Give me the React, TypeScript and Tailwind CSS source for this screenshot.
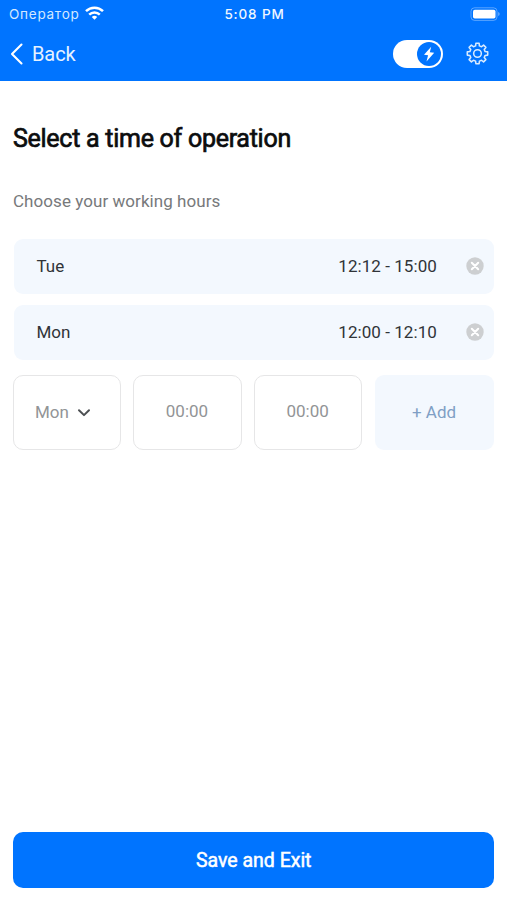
import React from "react";

const shifts = [
  { day: "Tue", hours: "12:12 - 15:00" },
  { day: "Mon", hours: "12:00 - 12:10" },
];

function gearOutline() {
  const points: string[] = [];
  const teeth = 8;
  const profile: [number, number][] = [
    [-14, 8.2],
    [-9, 10.8],
    [9, 10.8],
    [14, 8.2],
  ];
  for (let i = 0; i < teeth; i++) {
    for (const [offset, radius] of profile) {
      const angle = ((i * 360) / teeth + offset) * (Math.PI / 180);
      points.push(
        `${(12 + radius * Math.sin(angle)).toFixed(2)} ${(12 - radius * Math.cos(angle)).toFixed(2)}`,
      );
    }
  }
  return `M${points.join("L")}Z`;
}

function StatusBar() {
  return (
    <div className="grid h-7 grid-cols-[1fr_auto_1fr] items-center pl-[9px] pr-[7px] font-[Inter,sans-serif]">
      <div className="flex items-center gap-[5px]">
        <span className="text-[13.5px] tracking-[0.75px] text-[#d3e8ff]">Оператор</span>
        <svg className="-mt-[2px]" width="19" height="14" viewBox="0 0 19 14" fill="none" stroke="white" strokeWidth="2.5">
          <path d="M1 5.2a12.2 12.2 0 0 1 17 0" />
          <path d="M4.2 8.6a7.6 7.6 0 0 1 10.6 0" />
          <path d="M6.8 11.1a3.9 3.9 0 0 1 5.4 0L9.5 13.8Z" fill="white" stroke="none" />
        </svg>
      </div>
      <span className="text-[13.5px] font-medium tracking-[0.85px] text-[#f0f7ff]">5:08 PM</span>
      <svg className="-mt-px justify-self-end" width="30" height="14" viewBox="0 0 30 14">
        <rect x="1" y="0.8" width="26" height="12.6" rx="3.5" fill="none" stroke="white" strokeOpacity="0.35" />
        <rect x="3" y="2.8" width="22.5" height="8.8" rx="1.8" fill="white" />
        <path d="M28.3 5.1a2.2 2.2 0 0 1 0 4Z" fill="white" fillOpacity="0.5" />
      </svg>
    </div>
  );
}

function NavBar() {
  return (
    <div className="flex h-[51px] items-center pl-[10px] pr-[18px]">
      <button className="flex items-center gap-[9px] text-[20px] tracking-[-0.1px] text-[#e6f2ff]">
        <svg width="13" height="22" viewBox="0 0 13 22" fill="none" stroke="white" strokeWidth="2.1" strokeLinecap="round" strokeLinejoin="round">
          <path d="M11.5 1.5 2 11l9.5 9.5" />
        </svg>
        Back
      </button>
      <div className="ml-auto flex h-7 w-[50px] items-center justify-end rounded-full bg-white pr-[2px]">
        <div className="flex size-6 items-center justify-center rounded-full bg-[#0074ff]">
          <svg width="12" height="16" viewBox="0 0 12 16" fill="white">
            <path d="M8.2.8 1 8.8 5.1 9.3 3.5 15.4 11.2 6.7 6.8 6.2Z" />
          </svg>
        </div>
      </div>
      <svg className="ml-[23px]" width="23" height="23" viewBox="0 0 24 24" fill="none" stroke="#d9ebff" strokeWidth="1.6" strokeLinejoin="round">
        <path d={gearOutline()} />
        <circle cx="12" cy="12" r="4" />
      </svg>
    </div>
  );
}

function ShiftRow({ day, hours }: { day: string; hours: string }) {
  return (
    <div className="ml-px flex h-[55px] items-center rounded-[9px] bg-[#f3f8fe] pl-[22.5px] pr-[10px] text-[17px] text-[#303438]">
      <span>{day}</span>
      <span className="ml-auto tracking-[0.06px]">{hours}</span>
      <svg className="-mt-px ml-[29.5px]" width="18" height="18" viewBox="0 0 18 18">
        <circle cx="9" cy="9" r="8.7" fill="#cdcfd1" />
        <path d="m5.8 5.8 6.4 6.4m0-6.4-6.4 6.4" stroke="white" strokeWidth="2" strokeLinecap="round" />
      </svg>
    </div>
  );
}

export default function App() {
  return (
    <div className="flex h-[900px] w-[507px] flex-col bg-white font-[Roboto,sans-serif]">
      <header className="h-[81px] bg-[#0074ff] text-white">
        <StatusBar />
        <NavBar />
      </header>

      <main className="flex flex-1 flex-col pb-3 pl-[13px] pr-[12.6px]">
        <h1 className="mt-[42px] text-[25px] leading-8 tracking-[-0.27px] text-[#0c0d0e] [-webkit-text-stroke:0.7px_#0c0d0e]">
          Select a time of operation
        </h1>
        <p className="mt-[34px] text-[17px] leading-6 tracking-[0.06px] text-[#77797b]">Choose your working hours</p>

        <div className="mt-[26px] flex flex-col gap-[11px]">
          {shifts.map((shift) => (
            <ShiftRow key={shift.day} {...shift} />
          ))}
        </div>

        <div className="mt-[15px] grid h-[75px] grid-cols-[108px_108.4px_108.4px_1fr] gap-x-[12.3px] text-[17px] text-[#929496]">
          <button className="flex items-center rounded-[10px] border-[1.5px] border-[#e6e6e7] pl-[21px] pt-px">
            Mon
            <svg className="ml-2" width="14" height="10" viewBox="0 0 14 10" fill="none" stroke="#4c4f52" strokeWidth="2" strokeLinecap="round" strokeLinejoin="round">
              <path d="m2 2.3 5 4.8 5-4.8" />
            </svg>
          </button>
          <div className="flex items-center justify-center rounded-[10px] border-[1.5px] border-[#e6e6e7] pb-px pr-px">00:00</div>
          <div className="flex items-center justify-center rounded-[10px] border-[1.5px] border-[#e6e6e7] pb-px pr-px">00:00</div>
          <button className="flex items-center justify-center rounded-[9px] bg-[#f3f8fe] pr-px pt-px text-[#7f9fc5]">+ Add</button>
        </div>

        <button className="mt-auto h-14 rounded-[10px] bg-[#0074ff] pt-px text-[19.5px] text-white [-webkit-text-stroke:0.5px_white]">
          Save and Exit
        </button>
      </main>
    </div>
  );
}
